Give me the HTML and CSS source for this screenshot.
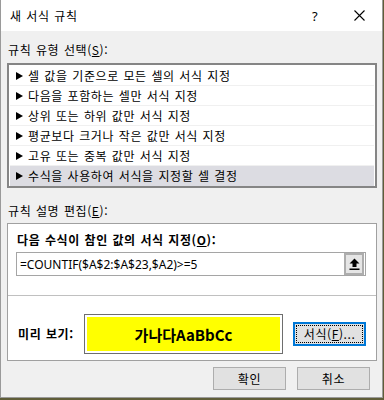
FILE: index.html
```html
<!DOCTYPE html>
<html lang="ko">
<head>
  <meta charset="UTF-8" />
  <title>새 서식 규칙</title>
  <link rel="stylesheet" href="styles.css">
</head>
<body>
  <div class="dialog">
    <div class="titlebar">
      <span class="title">새 서식 규칙</span>
      <span class="help">?</span>
      <span class="close">
        <svg width="11" height="11" viewBox="0 0 11 11"><path d="M0.5 0.5 L10.5 10.5 M10.5 0.5 L0.5 10.5" stroke="#000" stroke-width="1.1" fill="none"/></svg>
      </span>
    </div>

    <div class="content">
      <div class="label">규칙 유형 선택(<u>S</u>):</div>
      <ul class="ruleList">
        <li><span class="tri"></span>셀 값을 기준으로 모든 셀의 서식 지정</li>
        <li><span class="tri"></span>다음을 포함하는 셀만 서식 지정</li>
        <li><span class="tri"></span>상위 또는 하위 값만 서식 지정</li>
        <li><span class="tri"></span>평균보다 크거나 작은 값만 서식 지정</li>
        <li><span class="tri"></span>고유 또는 중복 값만 서식 지정</li>
        <li class="selected"><span class="tri"></span>수식을 사용하여 서식을 지정할 셀 결정</li>
      </ul>

      <div class="label label-edit">규칙 설명 편집(<u>E</u>):</div>
      <div class="desc">
        <div class="desc-title">다음 수식이 참인 값의 서식 지정(<u>O</u>):</div>
        <div class="formula">
          <span class="formula-text">=COUNTIF($A$2:$A$23,$A2)&gt;=5</span>
          <span class="ref-btn">
            <svg width="11" height="12" viewBox="0 0 11 12"><path d="M5.5 0.5 L10.5 5.5 L7.5 5.5 L7.5 9 L3.5 9 L3.5 5.5 L0.5 5.5 Z" fill="#000"/><rect x="0.5" y="10.5" width="10" height="1.5" fill="#000"/></svg>
          </span>
        </div>
        <div class="divider"></div>
        <div class="preview-row">
          <div class="preview-label">미리 보기:</div>
          <div class="preview-box">
            <div class="preview-fill">가나다AaBbCc</div>
          </div>
          <button class="format-btn"><span class="focus">서식(<u>F</u>)...</span></button>
        </div>
      </div>

      <div class="actions">
        <button class="btn">확인</button>
        <button class="btn">취소</button>
      </div>
    </div>
  </div>
</body>
</html>
```

FILE: styles.css
```css
body {
  margin: 0;
  background-color: #5f5d38;
  font-family: "Noto Sans CJK KR", "Noto Sans", sans-serif;
  font-size: 12px;
  letter-spacing: 0.6px;
  word-spacing: 0.7px;
  color: #000;
}

.dialog {
  width: 383px;
  height: 398px;
  box-sizing: border-box;
  border: 1px solid #9a9a9a;
  border-top: none;
  background-color: #f0f0f0;
  display: flex;
  flex-direction: column;
}

.titlebar {
  height: 31px;
  background-color: #fff;
  display: flex;
  align-items: center;
  flex-shrink: 0;
}

.title {
  margin-left: 9px;
  flex: 1;
  line-height: 16px;
}

.help {
  font-family: "Noto Sans", sans-serif;
  font-size: 13px;
  width: 20px;
  text-align: center;
  margin-right: 29px;
}

.close {
  display: flex;
  width: 11px;
  margin-right: 17px;
}

.content {
  padding: 0 5px 0 6px;
  display: flex;
  flex-direction: column;
}

.label {
  line-height: 16px;
  margin-top: 11px;
  padding-left: 1px;
}

.ruleList {
  list-style: none;
  margin: 5px 0 0;
  padding: 1px;
  height: 125px;
  box-sizing: border-box;
  border: 2px solid #858585;
  background-color: #fff;
}

.ruleList li {
  height: 19px;
  border-bottom: 1px solid #f0f0f0;
  display: flex;
  align-items: center;
  padding-left: 6px;
  line-height: 16px;
}

.ruleList li.selected {
  background-color: #dcdce2;
  border-bottom: none;
  height: 20px;
}

.tri {
  width: 0;
  height: 0;
  border-top: 4px solid transparent;
  border-bottom: 4px solid transparent;
  border-left: 7px solid #000;
  margin-right: 5px;
}

.label-edit {
  margin-top: 15px;
}

.desc {
  margin-top: 4px;
  height: 138px;
  box-sizing: border-box;
  border: 1px solid #a0a0a0;
  background-color: #fff;
  padding: 8px 10px 0 8px;
}

.desc-title {
  font-weight: bold;
  line-height: 16px;
  padding-left: 1px;
}

.formula {
  margin-top: 4px;
  height: 24px;
  box-sizing: border-box;
  border: 1px solid #a5a5a5;
  display: flex;
  align-items: center;
}

.formula-text {
  flex: 1;
  padding-left: 3px;
  font-family: "Noto Sans", sans-serif;
  font-size: 12px;
  letter-spacing: 0;
  word-spacing: 0;
}

.ref-btn {
  width: 20px;
  height: 22px;
  box-sizing: border-box;
  border: 2px solid #adadad;
  background-color: #e5e5e5;
  display: flex;
  align-items: center;
  justify-content: center;
  margin-right: 1px;
}

.divider {
  margin: 19px -10px 0 -8px;
  border-top: 1px solid #c0c0c0;
}

.preview-row {
  display: flex;
  align-items: center;
  margin-top: 18px;
}

.preview-label {
  font-weight: bold;
  width: 66px;
  padding-left: 2px;
  line-height: 16px;
}

.preview-box {
  width: 200px;
  height: 40px;
  box-sizing: border-box;
  border: 1px solid #6e6e6e;
  padding: 2px;
  background-color: #fff;
}

.preview-fill {
  height: 100%;
  background-color: #ffff00;
  display: flex;
  align-items: center;
  justify-content: center;
  font-weight: bold;
  font-size: 15px;
  letter-spacing: 0;
}

.format-btn {
  margin-left: 10px;
  width: 73px;
  height: 24px;
  box-sizing: border-box;
  border: 2px solid #0078d7;
  background-color: #e1e1e1;
  padding: 1px;
  font-family: inherit;
  font-size: 12px;
  letter-spacing: inherit;
  display: flex;
}

.focus {
  flex: 1;
  border: 1px dotted #000;
  display: flex;
  align-items: center;
  justify-content: center;
  line-height: 14px;
}

.actions {
  display: flex;
  justify-content: flex-end;
  gap: 11px;
  margin-top: 6px;
  padding-right: 7px;
}

.btn {
  width: 73px;
  height: 23px;
  border: 1px solid #adadad;
  background-color: #e1e1e1;
  font-family: inherit;
  font-size: 12px;
  letter-spacing: inherit;
  padding: 0;
}
```
